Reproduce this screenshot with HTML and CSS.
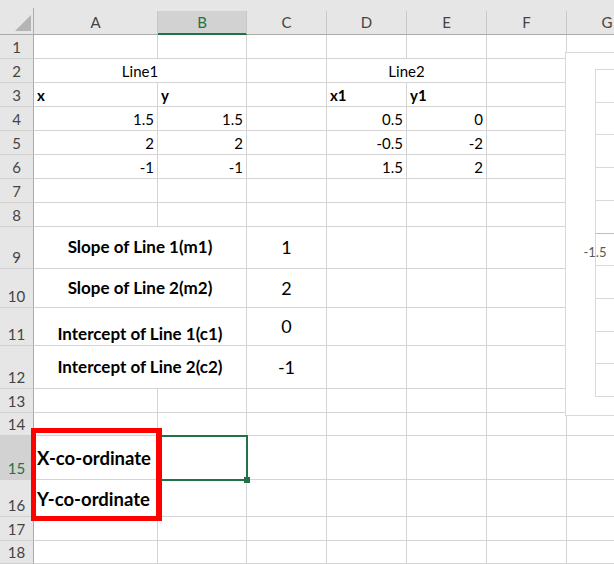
FILE: index.html
```html
<!DOCTYPE html>
<html>
<head>
<meta charset="utf-8">
<link rel="stylesheet" href="styles.css">
</head>
<body>
<div class="sheet">
  <div class="corner"><span><i class="tri"></i></span></div>
  <div class="colhead"><span>A</span></div>
  <div class="colhead active"><span>B</span></div>
  <div class="colhead"><span>C</span></div>
  <div class="colhead"><span>D</span></div>
  <div class="colhead"><span>E</span></div>
  <div class="colhead"><span>F</span></div>
  <div class="colhead last"><span>G</span></div>

  <div class="rowhead">1</div>
  <div class="cell"></div><div class="cell"></div><div class="cell"></div><div class="cell"></div><div class="cell"></div><div class="cell"></div><div class="cell g"></div>

  <div class="rowhead">2</div>
  <div class="cell span2 ctr">Line1</div><div class="cell"></div><div class="cell span2 ctr">Line2</div><div class="cell"></div><div class="cell g"></div>

  <div class="rowhead">3</div>
  <div class="cell b">x</div><div class="cell b">y</div><div class="cell"></div><div class="cell b">x1</div><div class="cell b">y1</div><div class="cell"></div><div class="cell g"></div>

  <div class="rowhead">4</div>
  <div class="cell r">1.5</div><div class="cell r">1.5</div><div class="cell"></div><div class="cell r">0.5</div><div class="cell r">0</div><div class="cell"></div><div class="cell g"></div>

  <div class="rowhead">5</div>
  <div class="cell r">2</div><div class="cell r">2</div><div class="cell"></div><div class="cell r">-0.5</div><div class="cell r">-2</div><div class="cell"></div><div class="cell g"></div>

  <div class="rowhead">6</div>
  <div class="cell r">-1</div><div class="cell r">-1</div><div class="cell"></div><div class="cell r">1.5</div><div class="cell r">2</div><div class="cell"></div><div class="cell g"></div>

  <div class="rowhead">7</div>
  <div class="cell"></div><div class="cell"></div><div class="cell"></div><div class="cell"></div><div class="cell"></div><div class="cell"></div><div class="cell g"></div>

  <div class="rowhead">8</div>
  <div class="cell"></div><div class="cell"></div><div class="cell"></div><div class="cell"></div><div class="cell"></div><div class="cell"></div><div class="cell g"></div>

  <div class="rowhead">9</div>
  <div class="cell span2 ctr mid b lbl">Slope of Line 1(m1)</div><div class="cell ctr mid big">1</div><div class="cell"></div><div class="cell"></div><div class="cell"></div><div class="cell g"></div>

  <div class="rowhead">10</div>
  <div class="cell span2 ctr mid b lbl">Slope of Line 2(m2)</div><div class="cell ctr mid big">2</div><div class="cell"></div><div class="cell"></div><div class="cell"></div><div class="cell g"></div>

  <div class="rowhead">11</div>
  <div class="cell span2 ctr b lbl">Intercept of Line 1(c1)</div><div class="cell ctr mid big">0</div><div class="cell"></div><div class="cell"></div><div class="cell"></div><div class="cell g"></div>

  <div class="rowhead">12</div>
  <div class="cell span2 ctr mid b lbl">Intercept of Line 2(c2)</div><div class="cell ctr mid big">-1</div><div class="cell"></div><div class="cell"></div><div class="cell"></div><div class="cell g"></div>

  <div class="rowhead">13</div>
  <div class="cell"></div><div class="cell"></div><div class="cell"></div><div class="cell"></div><div class="cell"></div><div class="cell"></div><div class="cell g"></div>

  <div class="rowhead">14</div>
  <div class="cell"></div><div class="cell"></div><div class="cell"></div><div class="cell"></div><div class="cell"></div><div class="cell"></div><div class="cell g"></div>

  <div class="rowhead active">15</div>
  <div class="cell mid b coord">X-co-ordinate</div><div class="cell sel"></div><div class="cell"></div><div class="cell"></div><div class="cell"></div><div class="cell"></div><div class="cell g"></div>

  <div class="rowhead">16</div>
  <div class="cell mid b coord">Y-co-ordinate</div><div class="cell"></div><div class="cell"></div><div class="cell"></div><div class="cell"></div><div class="cell"></div><div class="cell g"></div>

  <div class="rowhead">17</div>
  <div class="cell"></div><div class="cell"></div><div class="cell"></div><div class="cell"></div><div class="cell"></div><div class="cell"></div><div class="cell g"></div>

  <div class="rowhead">18</div>
  <div class="cell"></div><div class="cell"></div><div class="cell"></div><div class="cell"></div><div class="cell"></div><div class="cell"></div><div class="cell g"></div>

  <div class="chart">
    <svg class="plot" width="60" height="362" viewBox="0 0 60 362">
      <g stroke="#d9d9d9" stroke-width="1">
        <line x1="29.5" y1="16.5" x2="60" y2="16.5"/>
        <line x1="29.5" y1="49.5" x2="60" y2="49.5"/>
        <line x1="29.5" y1="81.5" x2="60" y2="81.5"/>
        <line x1="29.5" y1="114.5" x2="60" y2="114.5"/>
        <line x1="29.5" y1="147.5" x2="60" y2="147.5"/>
        <line x1="29.5" y1="212.5" x2="60" y2="212.5"/>
        <line x1="29.5" y1="245.5" x2="60" y2="245.5"/>
        <line x1="29.5" y1="278.5" x2="60" y2="278.5"/>
        <line x1="29.5" y1="310.5" x2="60" y2="310.5"/>
        <line x1="29.5" y1="343.5" x2="60" y2="343.5"/>
        <line x1="29.5" y1="16" x2="29.5" y2="344"/>
      </g>
      <line x1="29.5" y1="180.5" x2="60" y2="180.5" stroke="#bfbfbf" stroke-width="1"/>
      <text x="29" y="204" class="axis">-1.5</text>
    </svg>
  </div>
  <div class="redbox"></div>
</div>
</body>
</html>
```

FILE: styles.css
```css
html, body {
  margin: 0;
  padding: 0;
  background: #fff;
}

.sheet {
  position: relative;
  width: 614px;
  height: 564px;
  overflow: hidden;
  display: grid;
  grid-template-columns: 34px 124px 89px 80px 80px 80px 80px 47px;
  grid-template-rows: 35px repeat(8, 24px) 42px 39px 38px 43px 24px 23px 44px 37px 24px 23px;
  font-family: Lato, "Liberation Sans", sans-serif;
  font-size: 15px;
  color: #000;
}

.corner,
.colhead {
  background: #e6e6e6;
  border-bottom: 1px solid #ababab;
  display: flex;
  align-items: flex-end;
  box-sizing: border-box;
}

.corner span {
  flex: 1;
  height: 23px;
  border-right: 1px solid #ababab;
  display: flex;
  align-items: flex-end;
  justify-content: flex-end;
  padding: 0 2px 3px 0;
}

.tri {
  display: block;
  width: 16px;
  height: 16px;
  background: #b4b4b4;
  clip-path: polygon(100% 0, 100% 100%, 0 100%);
}

.colhead span {
  flex: 1;
  height: 23px;
  border-right: 1px solid #c8c8c8;
  text-align: center;
  line-height: 23px;
  color: #444;
}

.colhead.active {
  border-bottom-color: #217346;
}

.colhead.active span {
  background: #d2d2d2;
  color: #217346;
  box-shadow: inset 0 -1px 0 #217346;
}

.colhead.last span {
  flex: none;
  width: 80px;
  border-right: none;
}

.rowhead {
  background: #e6e6e6;
  border-right: 1px solid #ababab;
  border-bottom: 1px solid #d0d0d0;
  display: flex;
  align-items: flex-end;
  justify-content: center;
  line-height: 20px;
  padding-bottom: 1px;
  color: #444;
  box-sizing: border-box;
}

.rowhead.active {
  background: #d2d2d2;
  color: #217346;
}

.cell {
  box-sizing: border-box;
  border-right: 1px solid #d4d4d4;
  border-bottom: 1px solid #d4d4d4;
  display: flex;
  align-items: flex-end;
  padding: 0 3px 1px;
  line-height: 20px;
  white-space: nowrap;
  min-width: 0;
}

.cell.g {
  border-right: none;
}

.span2 {
  grid-column: span 2;
}

.r {
  justify-content: flex-end;
}

.ctr {
  justify-content: center;
}

.mid {
  align-items: center;
}

.b {
  font-weight: bold;
}

.lbl {
  font-size: 17px;
}

.coord {
  font-size: 18.5px;
  padding-top: 2px;
}

.big {
  font-size: 18px;
}

.sel {
  position: relative;
}

.sel::after {
  content: "";
  position: absolute;
  left: -2px;
  top: -1px;
  right: -2px;
  bottom: -2px;
  border: 2px solid #217346;
  box-sizing: border-box;
}

.sel::before {
  content: "";
  position: absolute;
  right: -4px;
  bottom: -4px;
  width: 6px;
  height: 6px;
  background: #217346;
  z-index: 1;
}

.chart {
  position: absolute;
  left: 565px;
  top: 52px;
  width: 60px;
  height: 364px;
  box-sizing: border-box;
  border: 1px solid #d9d9d9;
  background: #fff;
}

.plot {
  display: block;
}

.axis {
  font-family: Lato, "Liberation Sans", sans-serif;
  font-size: 13px;
  fill: #595959;
  text-anchor: middle;
}

.redbox {
  position: absolute;
  left: 31px;
  top: 428px;
  width: 131px;
  height: 93px;
  border: 5px solid #ff0000;
  border-right-width: 6px;
  box-sizing: border-box;
  z-index: 2;
}
```
